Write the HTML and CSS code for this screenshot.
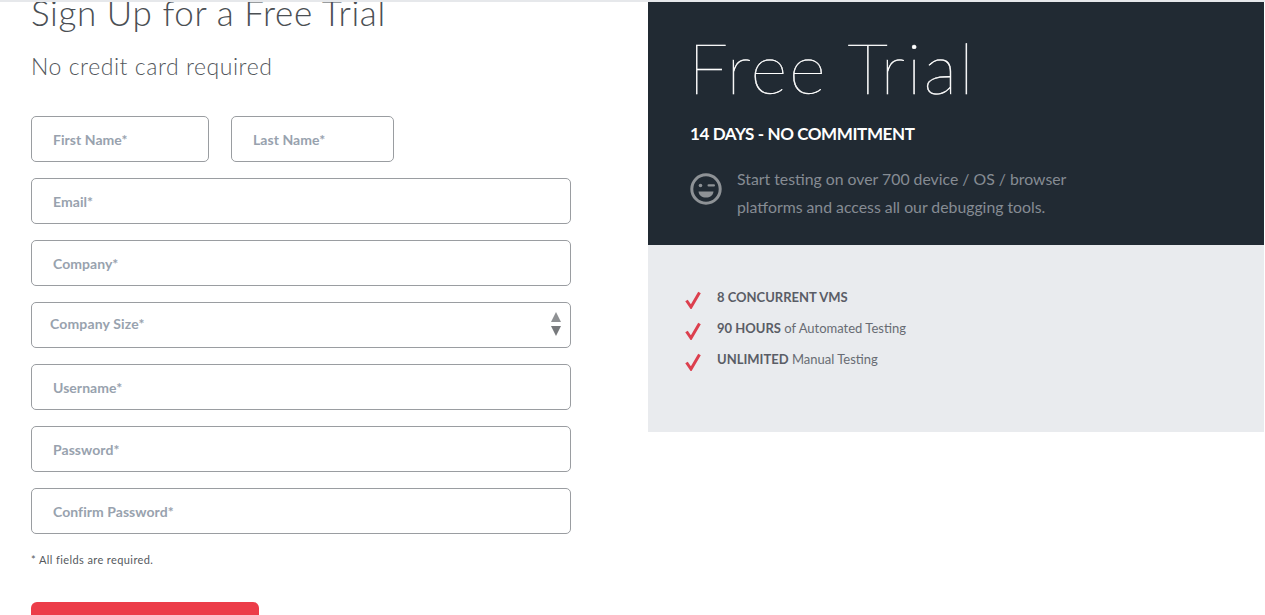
FILE: index.html
```html
<!DOCTYPE html>
<html>
<head>
    <title>Sign Up for a Free Trial</title>
    <link rel="stylesheet" href="styles.css">
</head>

<body>
    <div id="page">
        <form id="signup">
            <h1 class="title">Sign Up for a Free Trial</h1>
            <p class="subtitle">No credit card required</p>
            <div class="fields">
                <div class="name-row">
                    <input class="field first-name" type="text" placeholder="First Name*">
                    <input class="field last-name" type="text" placeholder="Last Name*">
                </div>
                <input class="field" type="email" placeholder="Email*">
                <input class="field" type="text" placeholder="Company*">
                <div class="select-wrap">
                    <select class="field select">
                        <option>Company Size*</option>
                    </select>
                    <svg class="select-arrows" width="10" height="24" viewBox="0 0 10 24">
                        <path class="arrow-up" d="M5 0 10 10H0z"/>
                        <path d="M0 14H10L5 24z"/>
                    </svg>
                </div>
                <input class="field" type="text" placeholder="Username*">
                <input class="field" type="password" placeholder="Password*">
                <input class="field" type="password" placeholder="Confirm Password*">
            </div>
            <p class="note">* All fields are required.</p>
            <button class="submit" type="button"></button>
        </form>

        <div id="side">
            <div class="promo">
                <h2 class="promo-title">Free Trial</h2>
                <div class="promo-days">14 DAYS - NO COMMITMENT</div>
                <div class="promo-text">
                    <svg class="wink" width="32" height="32" viewBox="0 0 32 32">
                        <circle class="wink-face" cx="16" cy="16" r="14.200"/>
                        <circle cx="10.500" cy="12.500" r="1.800"/>
                        <rect x="17.500" y="11.300" width="7.500" height="2.200" rx="1.100"/>
                        <path d="M8.500 18.500H23.500C23 22.500 20 24.500 16 24.500S9 22.500 8.500 18.500z"/>
                    </svg>
                    <p>Start testing on over 700 device / OS / browser platforms and access all our debugging tools.</p>
                </div>
            </div>
            <ul class="features">
                <li><svg class="check" width="16" height="18" viewBox="0 0 16 18"><path d="M1.500 9.500 6 16 14.500 1.500"/></svg><span><b>8 CONCURRENT VMS</b></span></li>
                <li><svg class="check" width="16" height="18" viewBox="0 0 16 18"><path d="M1.500 9.500 6 16 14.500 1.500"/></svg><span><b>90 HOURS</b> of Automated Testing</span></li>
                <li><svg class="check" width="16" height="18" viewBox="0 0 16 18"><path d="M1.500 9.500 6 16 14.500 1.500"/></svg><span><b>UNLIMITED</b> Manual Testing</span></li>
            </ul>
        </div>
    </div>
</body>
</html>
```

FILE: styles.css
```css
html, body {
    height: 100%;
    overflow: hidden;
}

body {
    margin: 0;
    font-family: 'Lato', 'Liberation Sans', sans-serif;
    background-color: white;
    border-top: 2px solid #e6e8eb;
    box-sizing: border-box;
}

#page {
    display: flex;
    height: 100%;
    overflow: hidden;
}

#signup {
    box-sizing: border-box;
    width: 648px;
    flex: none;
    padding-left: 31px;
}

.title {
    margin: -11px 0 0 0;
    font-size: 35px;
    line-height: 42px;
    font-weight: 300;
    letter-spacing: 0.6px;
    color: #4b4f54;
}

.subtitle {
    margin: 19px 0 0 0;
    font-size: 23px;
    line-height: 28px;
    font-weight: 300;
    letter-spacing: 0.55px;
    color: #53575c;
}

.fields {
    display: flex;
    flex-direction: column;
    row-gap: 16px;
    width: 540px;
    margin-top: 36px;
}

.name-row {
    display: flex;
    column-gap: 22px;
}

.field {
    box-sizing: border-box;
    display: block;
    width: 100%;
    height: 46px;
    padding: 0 21px;
    background-color: white;
    border: 1px solid #9a9da1;
    border-radius: 5px;
    outline: none;
    font-family: 'Lato', 'Liberation Sans', sans-serif;
    font-size: 14px;
    font-weight: 700;
    letter-spacing: 0.05px;
    color: #98a2ae;
}

.field::placeholder {
    color: #98a2ae;
    opacity: 1;
}

.first-name {
    width: 178px;
}

.last-name {
    width: 163px;
}

.select-wrap {
    position: relative;
}

.select {
    appearance: none;
    padding: 0 18px 3px 18px;
    letter-spacing: 0.15px;
}

.select-arrows {
    position: absolute;
    top: 10px;
    right: 10px;
    fill: #77797c;
}

.arrow-up {
    fill: #8f9194;
}

.note {
    margin: 19px 0 0 0;
    font-size: 11px;
    line-height: 14px;
    letter-spacing: 0.4px;
    color: #55595e;
}

.submit {
    display: block;
    width: 228px;
    height: 46px;
    margin-top: 35px;
    padding: 0;
    background-color: #ec3d49;
    border: none;
    border-radius: 6px;
}

#side {
    width: 616px;
    flex: none;
}

.promo {
    box-sizing: border-box;
    height: 243px;
    padding: 26px 42px 0 42px;
    background-color: #212a33;
}

.promo-title {
    margin: 0 0 0 -2px;
    font-size: 71px;
    line-height: 78px;
    font-weight: 100;
    letter-spacing: 1.900px;
    -webkit-text-stroke: 0.5px white;
    color: white;
}

.promo-days {
    margin-top: 17px;
    font-size: 17px;
    line-height: 22px;
    font-weight: 700;
    letter-spacing: -0.4px;
    color: white;
}

.promo-text {
    display: flex;
    align-items: flex-start;
    column-gap: 15px;
    margin-top: 20px;
}

.promo-text p {
    width: 345px;
    margin: 0;
    font-size: 15.800px;
    line-height: 28px;
    color: #868c93;
}

.wink {
    flex: none;
    margin-top: 8px;
    fill: #8e9296;
}

.wink-face {
    fill: none;
    stroke: #8e9296;
    stroke-width: 3;
}

.features {
    box-sizing: border-box;
    height: 187px;
    margin: 0;
    padding: 37px 0 0 37px;
    list-style: none;
    background-color: #e9ebee;
}

.features li {
    display: flex;
    column-gap: 16px;
    height: 31px;
    font-size: 13px;
    line-height: 31px;
    color: #686b73;
}

.features b {
    color: #5a5d66;
}

.check {
    flex: none;
    margin-top: 9px;
    fill: none;
    stroke: #dc3f4e;
    stroke-width: 3;
}
```
